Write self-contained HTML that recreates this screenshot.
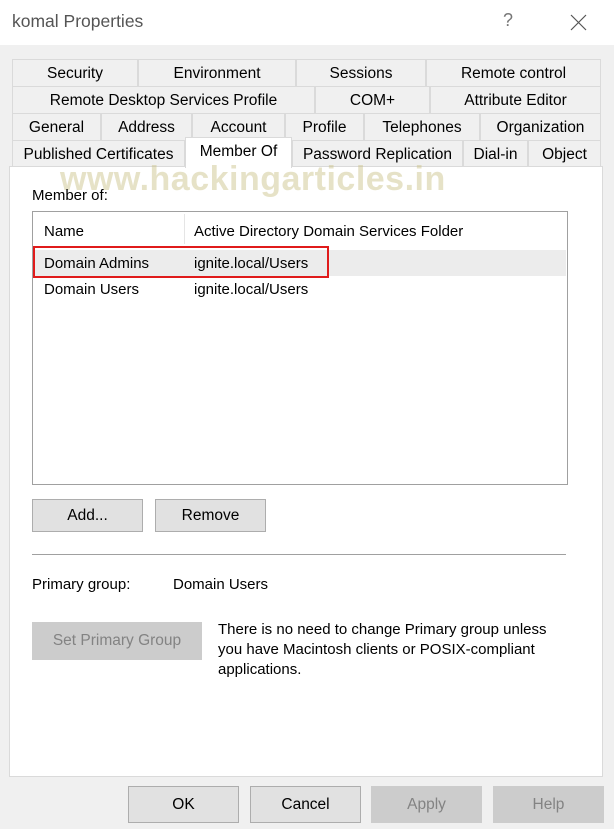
<!DOCTYPE html>
<html><head><style>
*{margin:0;padding:0;box-sizing:border-box}
body{width:614px;height:829px;background:#f0f0f0;font-family:"Liberation Sans",sans-serif;font-size:15px;color:#000;position:relative;overflow:hidden}
.a{position:absolute;white-space:nowrap}
.tab{position:absolute;border:1px solid #dadada;border-bottom:none;background:#f0f0f0;text-align:center;line-height:27px;font-size:15.5px}
.btn{position:absolute;background:#e1e1e1;border:1px solid #adadad;text-align:center;font-size:15.5px}
</style></head><body>
<div class="a" style="left:0;top:0;width:614px;height:45px;background:#fff"></div>
<div class="a" style="left:12px;top:11px;font-size:17.5px;color:#555">komal Properties</div>
<div class="a" style="left:503px;top:10px;font-size:18px;color:#777">?</div>
<svg class="a" style="left:570px;top:14px" width="17" height="17"><path d="M1 1L16 16M16 1L1 16" stroke="#555" stroke-width="1.2"/></svg>

<div class="tab" style="left:12px;top:59px;width:126px;height:27px">Security</div>
<div class="tab" style="left:138px;top:59px;width:158px;height:27px">Environment</div>
<div class="tab" style="left:296px;top:59px;width:130px;height:27px">Sessions</div>
<div class="tab" style="left:426px;top:59px;width:175px;height:27px">Remote control</div>
<div class="tab" style="left:12px;top:86px;width:303px;height:27px">Remote Desktop Services Profile</div>
<div class="tab" style="left:315px;top:86px;width:115px;height:27px">COM+</div>
<div class="tab" style="left:430px;top:86px;width:171px;height:27px">Attribute Editor</div>
<div class="tab" style="left:12px;top:113px;width:89px;height:27px">General</div>
<div class="tab" style="left:101px;top:113px;width:91px;height:27px">Address</div>
<div class="tab" style="left:192px;top:113px;width:93px;height:27px">Account</div>
<div class="tab" style="left:285px;top:113px;width:79px;height:27px">Profile</div>
<div class="tab" style="left:364px;top:113px;width:116px;height:27px">Telephones</div>
<div class="tab" style="left:480px;top:113px;width:121px;height:27px">Organization</div>
<div class="tab" style="left:12px;top:140px;width:173px;height:27px">Published Certificates</div>
<div class="tab" style="left:292px;top:140px;width:171px;height:27px">Password Replication</div>
<div class="tab" style="left:463px;top:140px;width:65px;height:27px">Dial-in</div>
<div class="tab" style="left:528px;top:140px;width:73px;height:27px">Object</div>

<div class="a" style="left:9px;top:166px;width:594px;height:611px;background:#fff;border:1px solid #dadada"></div>
<div class="tab" style="left:185px;top:137px;width:107px;height:31px;background:#fff;line-height:27px;border-color:#dadada">Member Of</div>

<div class="a" style="left:60px;top:160px;font-size:34px;font-weight:bold;color:rgba(200,190,130,0.45);letter-spacing:0.5px">www.hackingarticles.in</div>
<div class="a" style="left:32px;top:187px">Member of:</div>

<div class="a" style="left:32px;top:211px;width:536px;height:274px;border:1px solid #a0a0a0;background:#fff"></div>
<div class="a" style="left:184px;top:214px;width:1px;height:30px;background:#e5e5e5"></div>
<div class="a" style="left:44px;top:223px">Name</div>
<div class="a" style="left:194px;top:223px">Active Directory Domain Services Folder</div>
<div class="a" style="left:33px;top:250px;width:533px;height:26px;background:#ececec"></div>
<div class="a" style="left:44px;top:255px">Domain Admins</div>
<div class="a" style="left:194px;top:255px">ignite.local/Users</div>
<div class="a" style="left:33px;top:246px;width:296px;height:32px;border:2.5px solid #e01b1b"></div>
<div class="a" style="left:44px;top:281px">Domain Users</div>
<div class="a" style="left:194px;top:281px">ignite.local/Users</div>

<div class="btn" style="left:32px;top:499px;width:111px;height:33px;line-height:31px">Add...</div>
<div class="btn" style="left:155px;top:499px;width:111px;height:33px;line-height:31px">Remove</div>
<div class="a" style="left:32px;top:554px;width:534px;height:2px;background:#a0a0a0;border-bottom:1px solid #fff"></div>
<div class="a" style="left:32px;top:576px">Primary group:</div>
<div class="a" style="left:173px;top:576px">Domain Users</div>
<div class="btn" style="left:32px;top:622px;width:170px;height:38px;line-height:36px;background:#cccccc;border-color:#cccccc;color:#838383">Set Primary Group</div>
<div class="a" style="left:218px;top:620px;line-height:20px">There is no need to change Primary group unless<br>you have Macintosh clients or POSIX-compliant<br>applications.</div>

<div class="btn" style="left:128px;top:786px;width:111px;height:37px;line-height:35px">OK</div>
<div class="btn" style="left:250px;top:786px;width:111px;height:37px;line-height:35px">Cancel</div>
<div class="btn" style="left:371px;top:786px;width:111px;height:37px;line-height:35px;background:#cccccc;border-color:#cccccc;color:#838383">Apply</div>
<div class="btn" style="left:493px;top:786px;width:111px;height:37px;line-height:35px;background:#cccccc;border-color:#cccccc;color:#838383">Help</div>
</body></html>
